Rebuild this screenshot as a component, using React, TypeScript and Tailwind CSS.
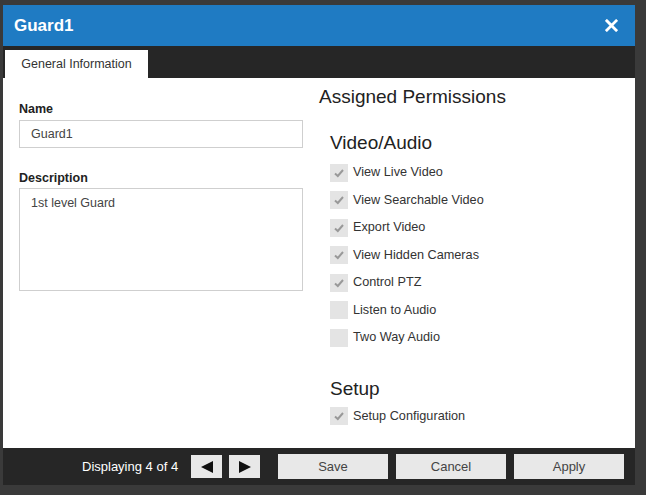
import type { FC } from "react";

type Perm = { label: string; checked: boolean };

const videoPerms: Perm[] = [
  { label: "View Live Video", checked: true },
  { label: "View Searchable Video", checked: true },
  { label: "Export Video", checked: true },
  { label: "View Hidden Cameras", checked: true },
  { label: "Control PTZ", checked: true },
  { label: "Listen to Audio", checked: false },
  { label: "Two Way Audio", checked: false },
];

const CheckRow: FC<Perm> = ({ label, checked }) => (
  <div className="flex h-[27.5px] items-center">
    <div className="flex h-[18px] w-[18px] items-center justify-center bg-[#e4e4e4]">
      {checked && (
        <svg viewBox="0 0 12 12" className="h-[12px] w-[12px]">
          <path d="M2 6.5 L4.8 9 L10 3" fill="none" stroke="#999" strokeWidth="2" />
        </svg>
      )}
    </div>
    <span className="ml-[5px] text-[12.7px] text-[#333]">{label}</span>
  </div>
);

const FooterButton: FC<{ label: string }> = ({ label }) => (
  <button className="h-[25px] w-[110px] bg-[#e8e8e8] text-[13px] text-[#444]">{label}</button>
);

export default function App() {
  return (
    <div
      className="h-[495px] w-[646px] overflow-hidden bg-[#3a3a3a] pt-[5px] pl-[3px]"
      style={{ fontFamily: '"Liberation Sans", Arial, sans-serif' }}
    >
      <div className="flex w-[632px] flex-col">
        {/* title bar */}
        <div className="flex h-[41px] items-center justify-between bg-[#1f7bc3] pl-[11px] pr-[17px]">
          <span className="text-[17px] font-bold text-white">Guard1</span>
          <svg viewBox="0 0 14 14" className="h-[13px] w-[13px]">
            <path d="M2 2 L12 12 M12 2 L2 12" stroke="white" strokeWidth="3" strokeLinecap="square" />
          </svg>
        </div>

        {/* tabs */}
        <div className="flex h-[32px] items-end bg-[#262626] pl-[2px]">
          <div className="flex h-[28px] w-[143px] items-center justify-center bg-white text-[12.5px] text-[#333]">
            General Information
          </div>
        </div>

        {/* body */}
        <div className="flex h-[370px] bg-white">
          <div className="w-[300px] pl-[16px] pt-[24px]">
            <div className="text-[12.5px] font-bold leading-[14px] text-[#222]">Name</div>
            <div className="mt-[4px] flex h-[28px] w-[284px] items-center border border-[#cfcfcf] pl-[11px] text-[12.5px] text-[#444]">
              Guard1
            </div>
            <div className="mt-[23px] text-[12.5px] font-bold leading-[14px] text-[#222]">Description</div>
            <div className="mt-[3px] h-[103px] w-[284px] border border-[#cfcfcf] pl-[11px] pt-[5px] text-[12.5px] text-[#444]">
              1st level Guard
            </div>
          </div>

          <div className="pl-[16px] pt-[8px]">
            <div className="text-[19px] leading-[22px] text-[#222]">Assigned Permissions</div>
            <div className="pl-[11px]">
              <div className="mt-[24px] text-[19px] leading-[22px] text-[#222]">Video/Audio</div>
              <div className="mt-[5px] flex flex-col">
                {videoPerms.map((p) => (
                  <CheckRow key={p.label} {...p} />
                ))}
              </div>
              <div className="mt-[26px] text-[19px] leading-[22px] text-[#222]">Setup</div>
              <div className="mt-[3px]">
                <CheckRow label="Setup Configuration" checked />
              </div>
            </div>
          </div>
        </div>

        {/* footer */}
        <div className="flex h-[37px] items-center bg-[#262626] pl-[79px]">
          <span className="w-[95px] whitespace-nowrap text-[13px] text-white">Displaying 4 of 4</span>
          <button className="ml-[14px] flex h-[23px] w-[31px] items-center justify-center bg-[#e8e8e8]">
            <svg viewBox="0 0 14 12" className="h-[12px] w-[14px]">
              <path d="M1 6 L13 0 L13 12 Z" fill="#111" />
            </svg>
          </button>
          <button className="ml-[7px] flex h-[23px] w-[31px] items-center justify-center bg-[#e8e8e8]">
            <svg viewBox="0 0 14 12" className="h-[12px] w-[14px]">
              <path d="M13 6 L1 0 L1 12 Z" fill="#111" />
            </svg>
          </button>
          <div className="ml-[18px] flex gap-[8px]">
            <FooterButton label="Save" />
            <FooterButton label="Cancel" />
            <FooterButton label="Apply" />
          </div>
        </div>
      </div>
    </div>
  );
}
